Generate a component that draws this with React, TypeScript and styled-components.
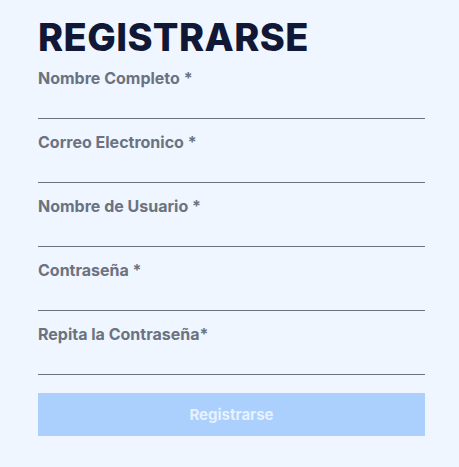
import React from "react";
import styled, { createGlobalStyle } from "styled-components";

const Global = createGlobalStyle`
  html, body { margin: 0; padding: 0; background: #eff6ff; }
  body { font-family: Inter, "Noto Sans", sans-serif; }
  * { box-sizing: border-box; }
`;

const Page = styled.div`
  width: 459px;
  height: 467px;
  background: #eff6ff;
  padding: 14px 34px 0 38px;
`;

const Form = styled.form`
  display: flex;
  flex-direction: column;
  width: 387px;
`;

const Title = styled.h1`
  margin: 0 0 8px;
  font-size: 38px;
  line-height: 46px;
  font-weight: 800;
  color: #111836;
  letter-spacing: 0.4px;
`;

const Field = styled.div`
  display: flex;
  flex-direction: column;
  margin-bottom: 13px;
`;

const Label = styled.label`
  font-size: 16px;
  line-height: 20px;
  font-weight: 700;
  color: #6b7280;
`;

const Input = styled.input`
  height: 31px;
  border: none;
  border-bottom: 1px solid #6b7280;
  background: transparent;
  outline: none;
  font-family: inherit;
  font-size: 14px;
  padding: 0;
`;

const Button = styled.button`
  margin-top: 5px;
  height: 43px;
  border: none;
  background: #abd0fd;
  color: #e8f1ff;
  font-family: inherit;
  font-size: 15px;
  font-weight: 700;
  cursor: not-allowed;
`;

const fields = [
  "Nombre Completo *",
  "Correo Electronico *",
  "Nombre de Usuario *",
  "Contraseña *",
  "Repita la Contraseña*",
];

export default function App() {
  return (
    <Page>
      <Global />
      <Form onSubmit={(e) => e.preventDefault()}>
        <Title>REGISTRARSE</Title>
        {fields.map((f) => (
          <Field key={f}>
            <Label>{f}</Label>
            <Input type={f.startsWith("Contra") || f.startsWith("Repita") ? "password" : "text"} />
          </Field>
        ))}
        <Button type="submit" disabled>
          Registrarse
        </Button>
      </Form>
    </Page>
  );
}
